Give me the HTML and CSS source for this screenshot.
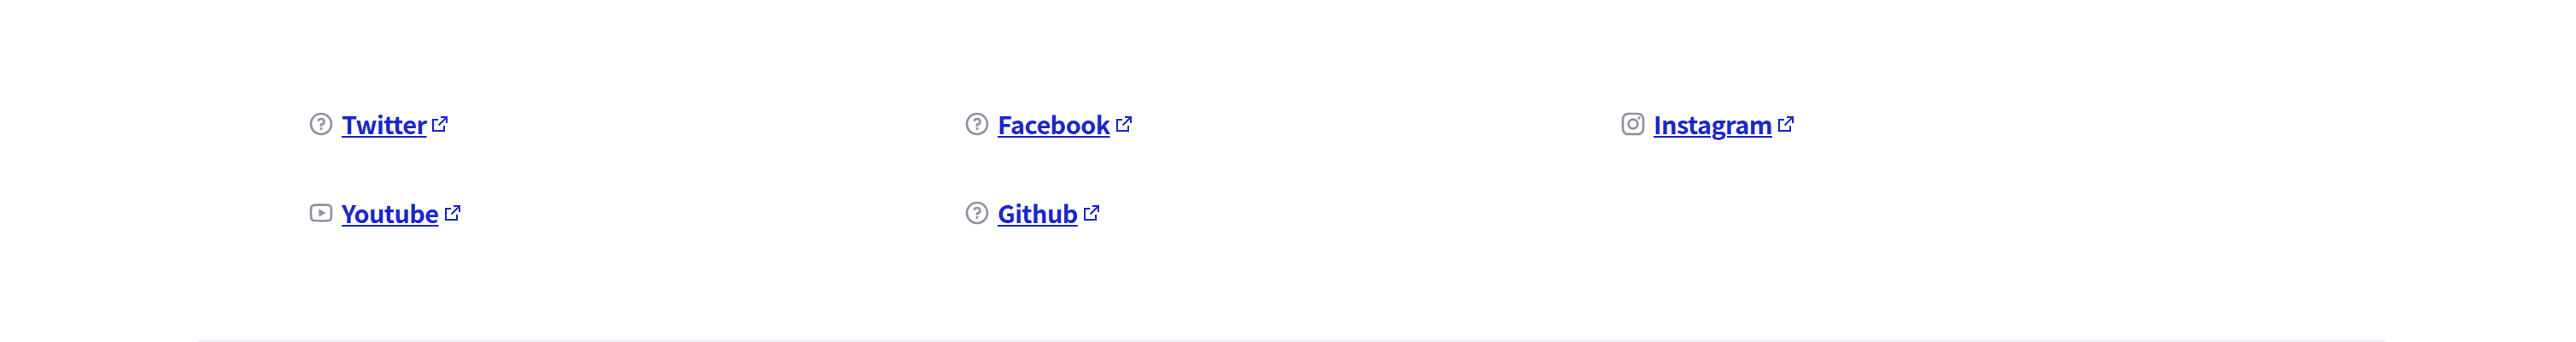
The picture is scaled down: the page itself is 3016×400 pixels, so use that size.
FILE: index.html
```html
<!DOCTYPE html>
<html lang="en">
<head>
<meta charset="utf-8">
<title>Social links</title>
<link rel="stylesheet" href="styles.css">
</head>
<body>
<svg class="defs" aria-hidden="true">
<symbol id="question" viewBox="0 0 24 24"><path d="M12 22C6.477 22 2 17.523 2 12S6.477 2 12 2s10 4.477 10 10-4.477 10-10 10zm0-2a8 8 0 1 0 0-16 8 8 0 0 0 0 16zm-1-5h2v2h-2v-2zm2-1.645V14h-2v-1.5a1 1 0 0 1 1-1 1.500 1.500 0 1 0-1.471-1.794l-1.962-.393A3.501 3.501 0 1 1 13 13.355z"/></symbol>
<symbol id="youtube" viewBox="0 0 24 24"><path d="M19.606 6.995c-.076-.298-.292-.523-.539-.592C18.630 6.280 16.500 6 12 6s-6.628.280-7.069.403c-.244.068-.460.293-.537.592C4.285 7.419 4 9.196 4 12s.285 4.580.394 5.006c.076.297.292.522.538.590C5.372 17.720 7.500 18 12 18s6.629-.280 7.069-.403c.244-.068.460-.293.537-.592C19.715 16.581 20 14.800 20 12s-.285-4.580-.394-5.005zm1.937-.497C22 8.280 22 12 22 12s0 3.720-.457 5.502c-.254.985-.997 1.760-1.938 2.022C17.896 20 12 20 12 20s-5.893 0-7.605-.476c-.945-.266-1.687-1.040-1.938-2.022C2 15.720 2 12 2 12s0-3.720.457-5.502c.254-.985.997-1.760 1.938-2.022C6.107 4 12 4 12 4s5.896 0 7.605.476c.945.266 1.687 1.040 1.938 2.022zM10 15.500v-7l6 3.500-6 3.500z"/></symbol>
<symbol id="instagram" viewBox="0 0 24 24"><path d="M12 9a3 3 0 1 0 0 6 3 3 0 0 0 0-6zm0-2a5 5 0 1 1 0 10 5 5 0 0 1 0-10zm6.500-.250a1.250 1.250 0 0 1-2.500 0 1.250 1.250 0 0 1 2.500 0zM12 4c-2.474 0-2.878.007-4.029.058-.784.037-1.310.142-1.798.332-.434.168-.747.369-1.080.703a2.890 2.890 0 0 0-.704 1.080c-.190.490-.295 1.015-.331 1.798C4.006 9.075 4 9.461 4 12c0 2.474.007 2.878.058 4.029.037.783.142 1.310.331 1.797.170.435.370.748.702 1.080.337.336.650.537 1.080.703.494.191 1.020.297 1.800.333C9.075 19.994 9.461 20 12 20c2.474 0 2.878-.007 4.029-.058.782-.037 1.309-.142 1.797-.331.433-.169.748-.370 1.080-.702.337-.337.538-.650.704-1.080.190-.493.296-1.020.332-1.800.052-1.104.058-1.490.058-4.029 0-2.474-.007-2.878-.058-4.029-.037-.782-.142-1.310-.332-1.798a2.911 2.911 0 0 0-.703-1.080 2.884 2.884 0 0 0-1.080-.704c-.490-.190-1.016-.295-1.798-.331C14.925 4.006 14.539 4 12 4zm0-2c2.717 0 3.056.010 4.122.060 1.065.050 1.790.217 2.428.465.660.254 1.216.598 1.772 1.153a4.908 4.908 0 0 1 1.153 1.772c.247.637.415 1.363.465 2.428.047 1.066.060 1.405.060 4.122s-.010 3.056-.060 4.122c-.050 1.065-.218 1.790-.465 2.428a4.883 4.883 0 0 1-1.153 1.772 4.915 4.915 0 0 1-1.772 1.153c-.637.247-1.363.415-2.428.465-1.066.047-1.405.060-4.122.060s-3.056-.010-4.122-.060c-1.065-.050-1.790-.218-2.428-.465a4.890 4.890 0 0 1-1.772-1.153 4.904 4.904 0 0 1-1.153-1.772c-.248-.637-.415-1.363-.465-2.428C2.013 15.056 2 14.717 2 12s.010-3.056.060-4.122c.050-1.066.217-1.790.465-2.428a4.880 4.880 0 0 1 1.153-1.772A4.897 4.897 0 0 1 5.450 2.525c.638-.248 1.362-.415 2.428-.465C8.944 2.013 9.283 2 12 2z"/></symbol>
<symbol id="external" viewBox="0 0 24 24"><path d="M10 6v2H5v11h11v-5h2v7H3V6h7zm11-3v8h-2V6.413l-7.793 7.794-1.414-1.414L17.585 5H13V3h8z"/></symbol>
</svg>
<main class="panel">
<ul class="links">
<li class="item"><svg class="icon"><use href="#question"/></svg><a class="link" href="#">Twitter</a><svg class="external"><use href="#external"/></svg></li>
<li class="item"><svg class="icon"><use href="#question"/></svg><a class="link" href="#">Facebook</a><svg class="external"><use href="#external"/></svg></li>
<li class="item"><svg class="icon"><use href="#instagram"/></svg><a class="link" href="#">Instagram</a><svg class="external"><use href="#external"/></svg></li>
<li class="item"><svg class="icon"><use href="#youtube"/></svg><a class="link" href="#">Youtube</a><svg class="external"><use href="#external"/></svg></li>
<li class="item"><svg class="icon"><use href="#question"/></svg><a class="link" href="#">Github</a><svg class="external"><use href="#external"/></svg></li>
</ul>
</main>
</body>
</html>
```
FILE: styles.css
```css
* { box-sizing: border-box; }
body { margin: 0; background: #fff; }
.defs { display: none; }
.panel {
  width: 2560px;
  height: 400px;
  margin-left: 232px;
  padding: 125px 128px 0;
  border-bottom: 3px solid #f2f1f9;
}
.links {
  display: grid;
  grid-template-columns: repeat(3, 768px);
  row-gap: 64px;
  margin: 0;
  padding: 0;
  list-style: none;
}
.item { display: flex; align-items: center; height: 40px; }
.icon { width: 32px; height: 32px; margin-right: 8px; fill: #8f93a0; }
.link {
  font: bold 28.8px/40px "Noto Sans CJK JP", sans-serif;
  letter-spacing: -0.52px;
  color: #1b26c9;
  text-decoration: underline;
  text-decoration-thickness: 2px;
  text-underline-offset: 2px;
}
.external { width: 24px; height: 24px; margin-left: 4px; fill: #1b26c9; }
```
